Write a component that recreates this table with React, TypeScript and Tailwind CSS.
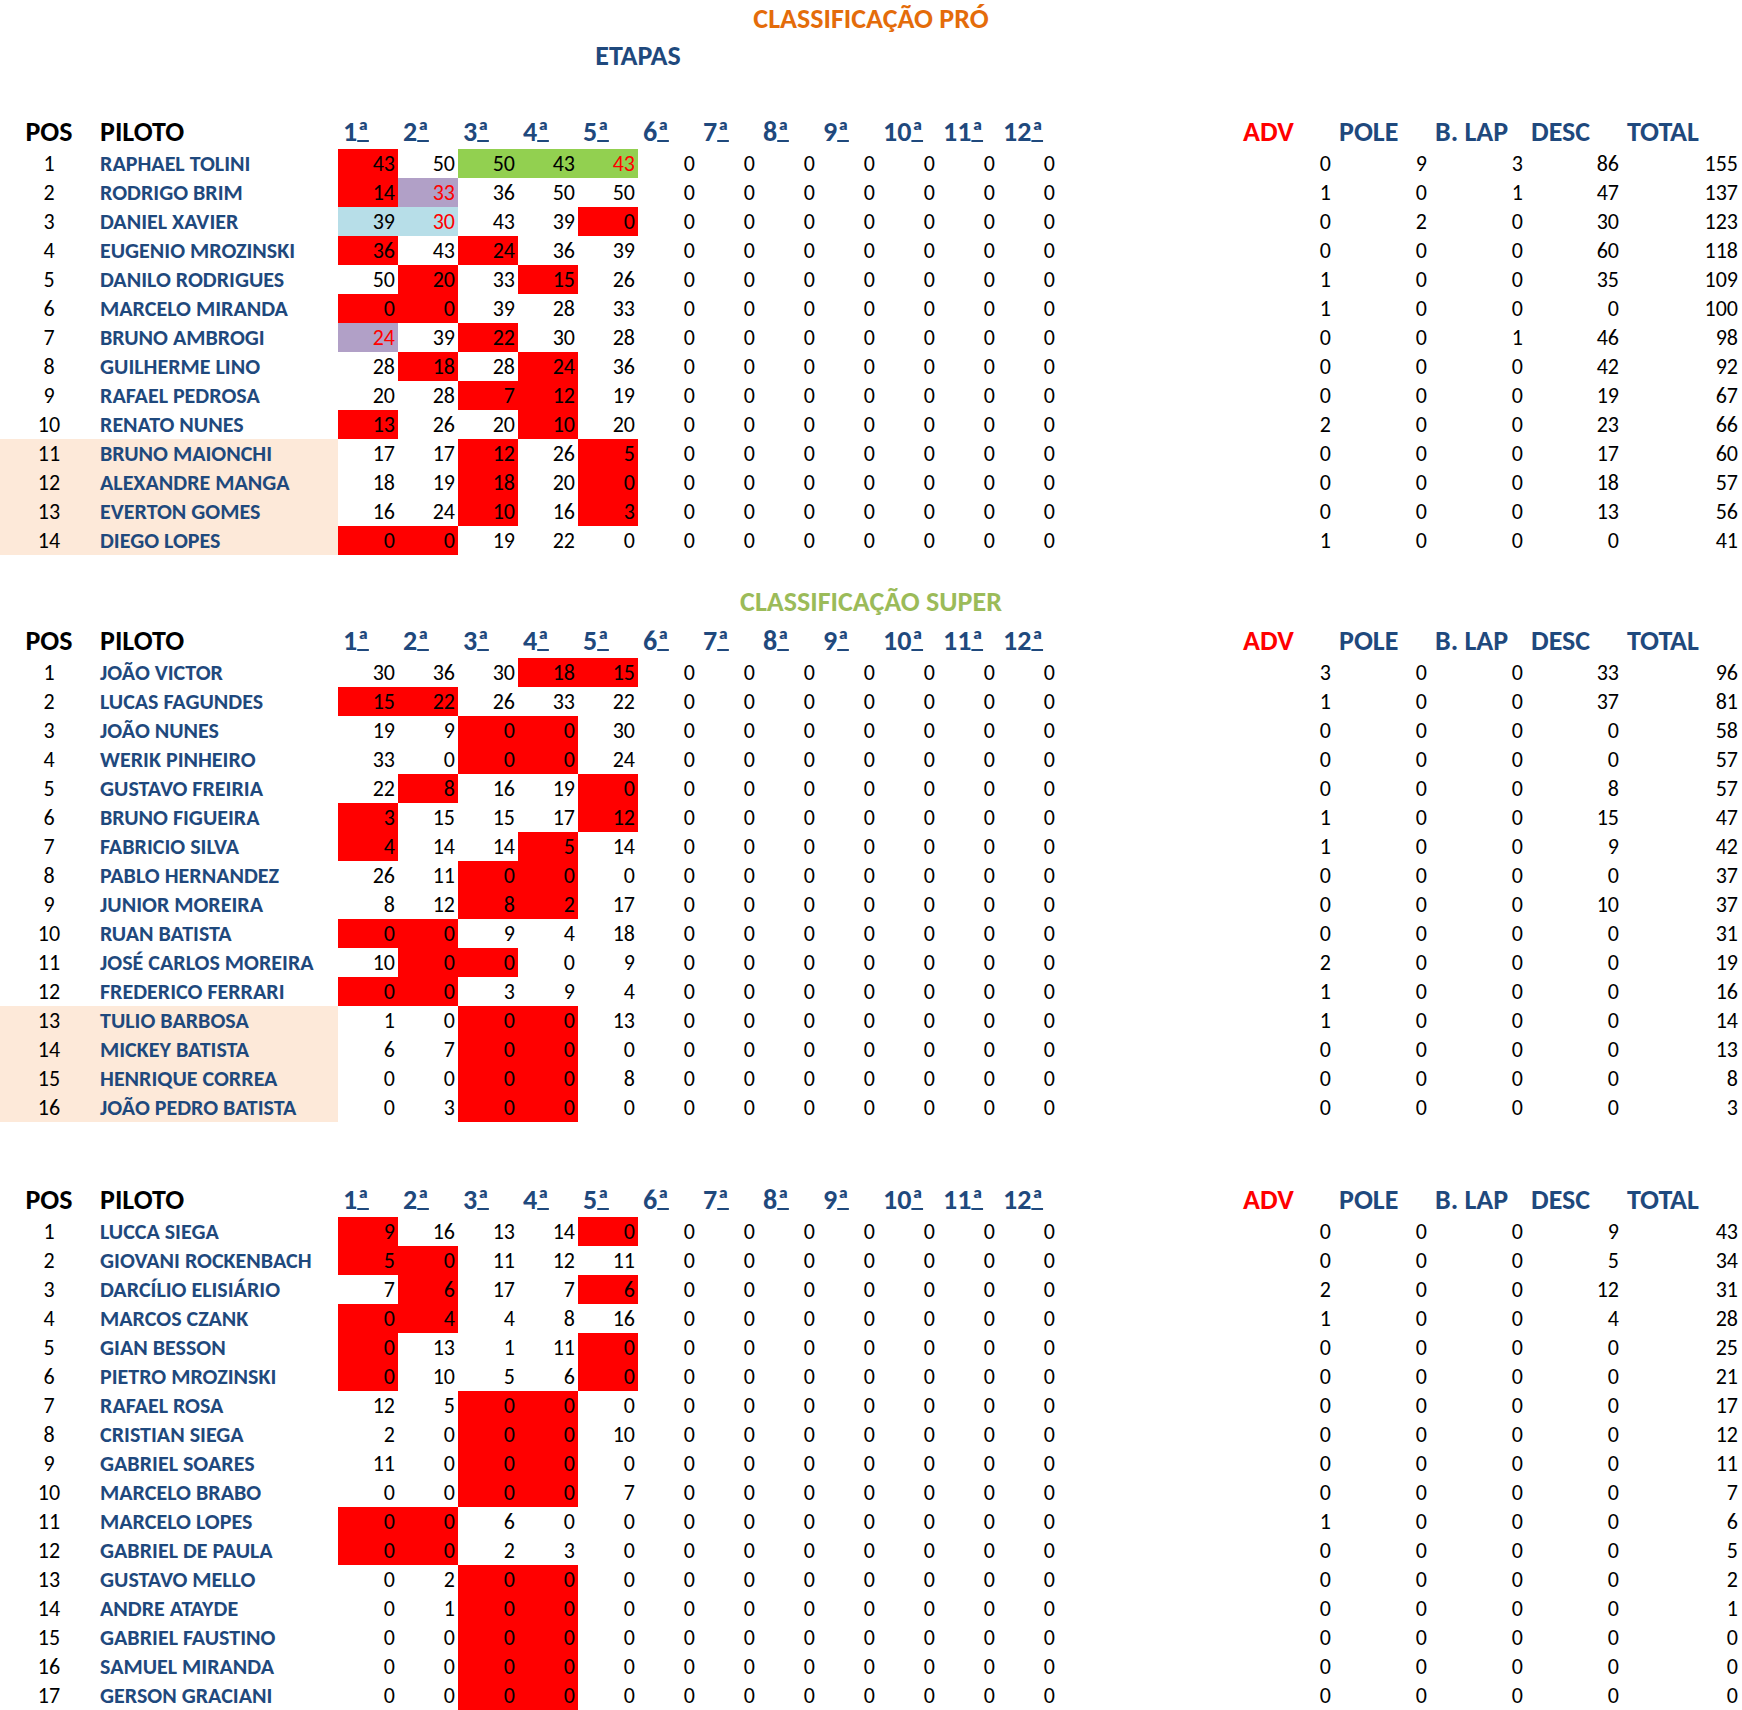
import React from "react";

type Row = {
  pos: number;
  name: string;
  stages: string[];
  adv: number;
  pole: number;
  lap: number;
  desc: number;
  total: number;
  peach?: boolean;
};

// stage cell code: number + optional bg letter (r red, g green, p purple, b blue) + "*" for red text
const bgClass: Record<string, string> = {
  r: "bg-[#ff0000]",
  g: "bg-[#92d050]",
  p: "bg-[#b1a0c7]",
  b: "bg-[#b7dee8]",
};

const r = (
  pos: number,
  name: string,
  stages: string[],
  adv: number,
  pole: number,
  lap: number,
  desc: number,
  total: number,
  peach = false
): Row => ({ pos, name, stages, adv, pole, lap, desc, total, peach });

const pro: Row[] = [
  r(1, "RAPHAEL TOLINI", ["43r", "50", "50g", "43g", "43g*"], 0, 9, 3, 86, 155),
  r(2, "RODRIGO BRIM", ["14r", "33p*", "36", "50", "50"], 1, 0, 1, 47, 137),
  r(3, "DANIEL XAVIER", ["39b", "30b*", "43", "39", "0r"], 0, 2, 0, 30, 123),
  r(4, "EUGENIO MROZINSKI", ["36r", "43", "24r", "36", "39"], 0, 0, 0, 60, 118),
  r(5, "DANILO RODRIGUES", ["50", "20r", "33", "15r", "26"], 1, 0, 0, 35, 109),
  r(6, "MARCELO MIRANDA", ["0r", "0r", "39", "28", "33"], 1, 0, 0, 0, 100),
  r(7, "BRUNO AMBROGI", ["24p*", "39", "22r", "30", "28"], 0, 0, 1, 46, 98),
  r(8, "GUILHERME LINO", ["28", "18r", "28", "24r", "36"], 0, 0, 0, 42, 92),
  r(9, "RAFAEL PEDROSA", ["20", "28", "7r", "12r", "19"], 0, 0, 0, 19, 67),
  r(10, "RENATO NUNES", ["13r", "26", "20", "10r", "20"], 2, 0, 0, 23, 66),
  r(11, "BRUNO MAIONCHI", ["17", "17", "12r", "26", "5r"], 0, 0, 0, 17, 60, true),
  r(12, "ALEXANDRE MANGA", ["18", "19", "18r", "20", "0r"], 0, 0, 0, 18, 57, true),
  r(13, "EVERTON GOMES", ["16", "24", "10r", "16", "3r"], 0, 0, 0, 13, 56, true),
  r(14, "DIEGO LOPES", ["0r", "0r", "19", "22", "0"], 1, 0, 0, 0, 41, true),
];

const superRows: Row[] = [
  r(1, "JOÃO VICTOR", ["30", "36", "30", "18r", "15r"], 3, 0, 0, 33, 96),
  r(2, "LUCAS FAGUNDES", ["15r", "22r", "26", "33", "22"], 1, 0, 0, 37, 81),
  r(3, "JOÃO NUNES", ["19", "9", "0r", "0r", "30"], 0, 0, 0, 0, 58),
  r(4, "WERIK PINHEIRO", ["33", "0", "0r", "0r", "24"], 0, 0, 0, 0, 57),
  r(5, "GUSTAVO FREIRIA", ["22", "8r", "16", "19", "0r"], 0, 0, 0, 8, 57),
  r(6, "BRUNO FIGUEIRA", ["3r", "15", "15", "17", "12r"], 1, 0, 0, 15, 47),
  r(7, "FABRICIO SILVA", ["4r", "14", "14", "5r", "14"], 1, 0, 0, 9, 42),
  r(8, "PABLO HERNANDEZ", ["26", "11", "0r", "0r", "0"], 0, 0, 0, 0, 37),
  r(9, "JUNIOR MOREIRA", ["8", "12", "8r", "2r", "17"], 0, 0, 0, 10, 37),
  r(10, "RUAN BATISTA", ["0r", "0r", "9", "4", "18"], 0, 0, 0, 0, 31),
  r(11, "JOSÉ CARLOS MOREIRA", ["10", "0r", "0r", "0", "9"], 2, 0, 0, 0, 19),
  r(12, "FREDERICO FERRARI", ["0r", "0r", "3", "9", "4"], 1, 0, 0, 0, 16),
  r(13, "TULIO BARBOSA", ["1", "0", "0r", "0r", "13"], 1, 0, 0, 0, 14, true),
  r(14, "MICKEY BATISTA", ["6", "7", "0r", "0r", "0"], 0, 0, 0, 0, 13, true),
  r(15, "HENRIQUE CORREA", ["0", "0", "0r", "0r", "8"], 0, 0, 0, 0, 8, true),
  r(16, "JOÃO PEDRO BATISTA", ["0", "3", "0r", "0r", "0"], 0, 0, 0, 0, 3, true),
];

const third: Row[] = [
  r(1, "LUCCA SIEGA", ["9r", "16", "13", "14", "0r"], 0, 0, 0, 9, 43),
  r(2, "GIOVANI ROCKENBACH", ["5r", "0r", "11", "12", "11"], 0, 0, 0, 5, 34),
  r(3, "DARCÍLIO ELISIÁRIO", ["7", "6r", "17", "7", "6r"], 2, 0, 0, 12, 31),
  r(4, "MARCOS CZANK", ["0r", "4r", "4", "8", "16"], 1, 0, 0, 4, 28),
  r(5, "GIAN BESSON", ["0r", "13", "1", "11", "0r"], 0, 0, 0, 0, 25),
  r(6, "PIETRO MROZINSKI", ["0r", "10", "5", "6", "0r"], 0, 0, 0, 0, 21),
  r(7, "RAFAEL ROSA", ["12", "5", "0r", "0r", "0"], 0, 0, 0, 0, 17),
  r(8, "CRISTIAN SIEGA", ["2", "0", "0r", "0r", "10"], 0, 0, 0, 0, 12),
  r(9, "GABRIEL SOARES", ["11", "0", "0r", "0r", "0"], 0, 0, 0, 0, 11),
  r(10, "MARCELO BRABO", ["0", "0", "0r", "0r", "7"], 0, 0, 0, 0, 7),
  r(11, "MARCELO LOPES", ["0r", "0r", "6", "0", "0"], 1, 0, 0, 0, 6),
  r(12, "GABRIEL DE PAULA", ["0r", "0r", "2", "3", "0"], 0, 0, 0, 0, 5),
  r(13, "GUSTAVO MELLO", ["0", "2", "0r", "0r", "0"], 0, 0, 0, 0, 2),
  r(14, "ANDRE ATAYDE", ["0", "1", "0r", "0r", "0"], 0, 0, 0, 0, 1),
  r(15, "GABRIEL FAUSTINO", ["0", "0", "0r", "0r", "0"], 0, 0, 0, 0, 0),
  r(16, "SAMUEL MIRANDA", ["0", "0", "0r", "0r", "0"], 0, 0, 0, 0, 0),
  r(17, "GERSON GRACIANI", ["0", "0", "0r", "0r", "0"], 0, 0, 0, 0, 0),
];

const stageNumbers = ["1", "2", "3", "4", "5", "6", "7", "8", "9", "10", "11", "12"];

function StageCell({ code }: { code: string }) {
  const m = code.match(/^(\d+)([rgpb]?)(\*?)$/);
  const value = m ? m[1] : code;
  const bg = m && m[2] ? bgClass[m[2]] : "";
  const red = m && m[3] === "*";
  return (
    <div
      className={`w-[60px] h-full flex items-center justify-end pr-[3px] ${bg} ${
        red ? "text-[#ff0000]" : "text-black"
      }`}
    >
      {value}
    </div>
  );
}

function HeaderRow() {
  return (
    <div className="flex h-[35px] items-center font-bold text-[28px] whitespace-nowrap">
      <div className="w-[98px] text-center text-black">POS</div>
      <div className="w-[240px] pl-[2px] text-black">PILOTO</div>
      {stageNumbers.map((s) => (
        <div key={s} className="w-[60px] pl-[5px] text-[#1f497d]">
          {s}
          <span className="underline decoration-2 underline-offset-[-1px]">ª</span>
        </div>
      ))}
      <div className="w-[180px]" />
      <div className="w-[96px] pl-[5px] text-[#ff0000]">ADV</div>
      <div className="w-[96px] pl-[5px] text-[#1f497d]">POLE</div>
      <div className="w-[96px] pl-[5px] text-[#1f497d]">B. LAP</div>
      <div className="w-[96px] pl-[5px] text-[#1f497d]">DESC</div>
      <div className="w-[120px] pl-[5px] text-[#1f497d]">TOTAL</div>
    </div>
  );
}

function DataRow({ row }: { row: Row }) {
  const peach = row.peach ? "bg-[#fde9d9]" : "";
  const stages = [...row.stages, ...Array(7).fill("0")];
  return (
    <div className="flex h-[29px] items-center">
      <div className={`w-[98px] h-full flex items-center justify-center text-black ${peach}`}>
        {row.pos}
      </div>
      <div
        className={`w-[240px] h-full flex items-center pl-[2px] font-bold text-[#1f497d] whitespace-nowrap ${peach}`}
      >
        {row.name}
      </div>
      {stages.map((c, i) => (
        <StageCell key={i} code={c} />
      ))}
      <div className="w-[180px]" />
      <div className="w-[96px] text-right pr-[3px]">{row.adv}</div>
      <div className="w-[96px] text-right pr-[3px]">{row.pole}</div>
      <div className="w-[96px] text-right pr-[3px]">{row.lap}</div>
      <div className="w-[96px] text-right pr-[3px]">{row.desc}</div>
      <div className="w-[120px] text-right pr-[4px]">{row.total}</div>
    </div>
  );
}

function Table({ rows }: { rows: Row[] }) {
  return (
    <div>
      <HeaderRow />
      {rows.map((row) => (
        <DataRow key={row.pos} row={row} />
      ))}
    </div>
  );
}

export default function App() {
  return (
    <div
      className="w-[1742px] h-[1710px] bg-white text-black text-[22px] leading-none overflow-hidden"
      style={{ fontFamily: '"Carlito", "Liberation Sans Narrow", "Lato", sans-serif' }}
    >
      <div className="h-[38px] flex items-center justify-center font-bold text-[28px] text-[#e46c0a]">
        CLASSIFICAÇÃO PRÓ
      </div>
      <div className="h-[36px] flex items-center">
        <div className="w-[338px]" />
        <div className="w-[600px] text-center font-bold text-[28px] text-[#1f497d]">ETAPAS</div>
      </div>
      <div className="h-[40px]" />
      <Table rows={pro} />

      <div className="h-[26px]" />
      <div className="h-[42px] flex items-center justify-center font-bold text-[28px] text-[#9bbb59]">
        CLASSIFICAÇÃO SUPER
      </div>
      <Table rows={superRows} />

      <div className="h-[60px]" />
      <Table rows={third} />
    </div>
  );
}
